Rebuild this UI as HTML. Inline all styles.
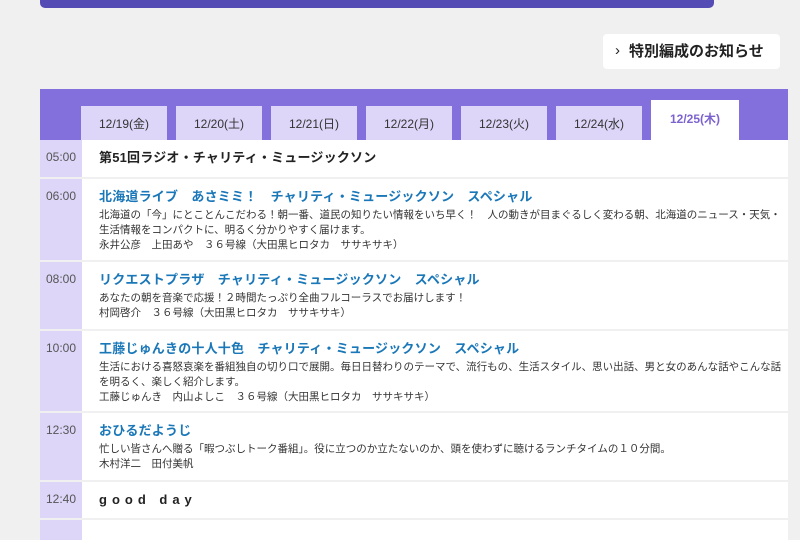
<!DOCTYPE html>
<html><head><meta charset="utf-8"><style>
body{margin:0;width:800px;height:533px;overflow:hidden;background:#f0f0f0;font-family:"Liberation Sans","Noto Sans CJK JP",sans-serif;position:relative}
.top{position:absolute;left:40px;top:-6px;width:674px;height:14px;background:#554bb4;border-radius:5px}
.btn{position:absolute;left:603px;top:34px;width:177px;height:35px;background:#fff;border-radius:4px;font-size:15px;font-weight:bold;color:#222;line-height:35px;box-sizing:border-box;padding-left:26px}
.btn:before{content:"›";position:absolute;left:12px;top:-1px;font-weight:normal;font-size:15px}
.hdr{position:absolute;left:40px;top:89px;width:748px;height:51px;background:#8470dc}
.tab{position:absolute;top:17px;width:86px;height:34px;background:#ddd6f8;color:#333;font-size:12px;text-align:center;line-height:36px}
.tab.on{top:11px;height:40px;width:88px;background:#fff;color:#7d63d0;font-weight:bold;line-height:38px}
.row{position:absolute;left:40px;width:748px;background:#fff}
.row .t{position:absolute;left:0;top:0;bottom:0;width:42px;background:#ddd6f8;font-size:12px;color:#555;text-align:center;padding-top:10px;box-sizing:border-box}
.row .c{margin-left:59px;padding-top:9px}
.ti{font-size:13px;font-weight:bold;color:#1a77b8;line-height:17px;letter-spacing:0.2px}
.ti.k{color:#222}
.d{font-size:10.5px;color:#333;line-height:15px;margin-top:3px;padding-right:2px}
</style></head><body>
<div class="top"></div>
<div class="btn">特別編成のお知らせ</div>
<div class="hdr">
<div class="tab" style="left:41px">12/19(金)</div>
<div class="tab" style="left:136px">12/20(土)</div>
<div class="tab" style="left:231px">12/21(日)</div>
<div class="tab" style="left:326px">12/22(月)</div>
<div class="tab" style="left:421px">12/23(火)</div>
<div class="tab" style="left:516px">12/24(水)</div>
<div class="tab on" style="left:611px">12/25(木)</div>
</div>
<div class="row" style="top:140px;height:37px"><div class="t">05:00</div><div class="c"><div class="ti k">第51回ラジオ・チャリティ・ミュージックソン</div></div></div>
<div class="row" style="top:179px;height:81px"><div class="t">06:00</div><div class="c"><div class="ti">北海道ライブ　あさミミ！　チャリティ・ミュージックソン　スペシャル</div><div class="d">北海道の「今」にとことんこだわる！朝一番、道民の知りたい情報をいち早く！　人の動きが目まぐるしく変わる朝、北海道のニュース・天気・生活情報をコンパクトに、明るく分かりやすく届けます。<br>永井公彦　上田あや　３６号線（大田黒ヒロタカ　ササキサキ）</div></div></div>
<div class="row" style="top:262px;height:67px"><div class="t">08:00</div><div class="c"><div class="ti">リクエストプラザ　チャリティ・ミュージックソン　スペシャル</div><div class="d">あなたの朝を音楽で応援！２時間たっぷり全曲フルコーラスでお届けします！<br>村岡啓介　３６号線（大田黒ヒロタカ　ササキサキ）</div></div></div>
<div class="row" style="top:331px;height:80px"><div class="t">10:00</div><div class="c"><div class="ti">工藤じゅんきの十人十色　チャリティ・ミュージックソン　スペシャル</div><div class="d">生活における喜怒哀楽を番組独自の切り口で展開。毎日日替わりのテーマで、流行もの、生活スタイル、思い出話、男と女のあんな話やこんな話を明るく、楽しく紹介します。<br>工藤じゅんき　内山よしこ　３６号線（大田黒ヒロタカ　ササキサキ）</div></div></div>
<div class="row" style="top:413px;height:67px"><div class="t">12:30</div><div class="c"><div class="ti">おひるだようじ</div><div class="d">忙しい皆さんへ贈る「暇つぶしトーク番組」。役に立つのか立たないのか、頭を使わずに聴けるランチタイムの１０分間。<br>木村洋二　田付美帆</div></div></div>
<div class="row" style="top:482px;height:36px"><div class="t">12:40</div><div class="c"><div class="ti k" style="letter-spacing:5px;font-family:'Liberation Sans',sans-serif">good day</div></div></div>
<div class="row" style="top:520px;height:20px"><div class="t"></div></div>
</body></html>
